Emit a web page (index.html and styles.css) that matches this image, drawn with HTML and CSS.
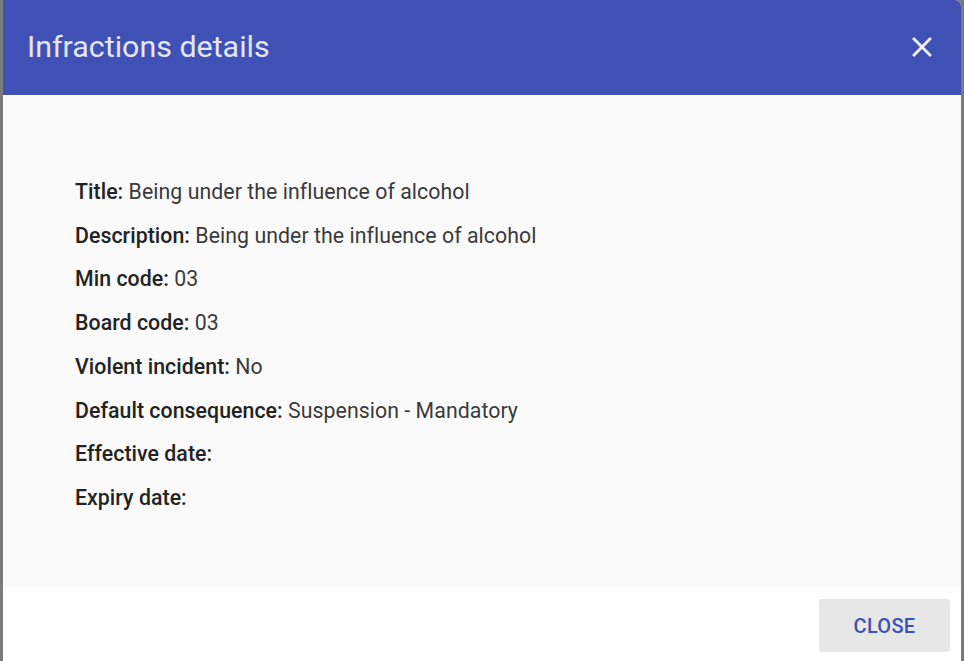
FILE: index.html
```html
<!DOCTYPE html>
<html>
<head>
<meta charset="utf-8">
<link rel="stylesheet" href="styles.css">
</head>
<body>
<div class="backdrop">
  <div class="dialog">
    <div class="header">
      <h1 class="title">Infractions details</h1>
      <button class="icon-btn" aria-label="close">
        <svg width="24" height="24" viewBox="0 0 24 24"><path d="M19 6.41L17.59 5 12 10.59 6.41 5 5 6.41 10.59 12 5 17.59 6.41 19 12 13.41 17.59 19 19 17.59 13.41 12z" fill="currentColor"/></svg>
      </button>
    </div>
    <div class="content">
      <p class="row"><span class="label">Title:</span> Being under the influence of alcohol</p>
      <p class="row"><span class="label">Description:</span> Being under the influence of alcohol</p>
      <p class="row"><span class="label">Min code:</span> 03</p>
      <p class="row"><span class="label">Board code:</span> 03</p>
      <p class="row"><span class="label">Violent incident:</span> No</p>
      <p class="row"><span class="label">Default consequence:</span> Suspension - Mandatory</p>
      <p class="row"><span class="label">Effective date:</span></p>
      <p class="row"><span class="label">Expiry date:</span></p>
    </div>
    <div class="footer">
      <button class="close-btn">CLOSE</button>
    </div>
  </div>
</div>
</body>
</html>
```
FILE: styles.css
```css
html, body {
  margin: 0;
  padding: 0;
  height: 100%;
}
body {
  background: #7b7b7b;
  font-family: Roboto, "Noto Sans", sans-serif;
}
.backdrop {
  height: 661px;
  padding: 0 3px;
  box-sizing: border-box;
  overflow: hidden;
}
.dialog {
  width: 958px;
  height: 661px;
  display: flex;
  flex-direction: column;
  background: #fff;
  border-radius: 0 6px 0 0;
  overflow: hidden;
}
.header {
  height: 95px;
  flex: none;
  background: #3f51b5;
  display: flex;
  align-items: center;
  justify-content: space-between;
  padding: 0 22px 0 24px;
}
.title {
  margin: 0;
  font-size: 30.4px;
  font-weight: 400;
  color: #e3e6f7;
  letter-spacing: 0;
  position: relative;
  top: -1px;
}
.icon-btn {
  background: none;
  border: 0;
  padding: 0;
  color: #eef0fb;
  display: flex;
  position: relative;
  top: -1px;
}
.icon-btn svg {
  width: 34px;
  height: 34px;
}
.content {
  flex: none;
  height: 492px;
  box-sizing: border-box;
  background: #fafafa;
  padding: 75px 72px 0;
}
.row {
  margin: 0;
  font-size: 21.3px;
  line-height: 43.7px;
  letter-spacing: 0.05px;
  color: #3a3a3a;
}
.label {
  font-weight: 500;
  color: #232323;
}
.footer {
  flex: 1;
  display: flex;
  justify-content: flex-end;
  align-items: flex-start;
  padding: 12px 11px 0 0;
}
.close-btn {
  width: 131px;
  height: 53px;
  background: #e7e7e7;
  border: 0;
  border-radius: 3px;
  color: #3f51b5;
  font-family: Roboto, "Noto Sans", sans-serif;
  font-size: 20px;
  font-weight: 500;
  letter-spacing: 0.3px;
}
```
